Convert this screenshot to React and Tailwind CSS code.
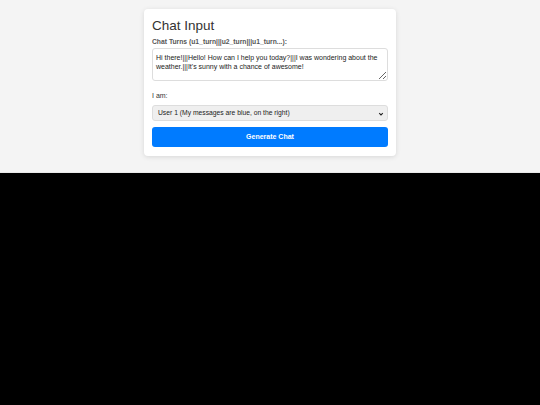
export default function App() {
  return (
    <div className="min-h-screen bg-black" style={{ fontFamily: '"Liberation Sans", Arial, sans-serif' }}>
      <div className="bg-[#f4f4f4] h-[173px] pt-[9px] border-b border-[#e8e8e8]">
        <div className="mx-auto w-[252px] bg-white rounded-[4px] shadow-[0_1px_5px_rgba(0,0,0,0.12)] px-[8px] pt-[8px] pb-[9px]">
          <h1 className="text-[13.5px] leading-[16px] text-[#333] mt-[1px] mb-[3px]">Chat Input</h1>
          <label className="block text-[6.75px] font-bold text-[#555] leading-[9px] mb-[2px]">
            Chat Turns (u1_turn|||u2_turn|||u1_turn...):
          </label>
          <textarea
            className="block w-full h-[33px] border border-[#ddd] rounded-[3px] pl-[3px] pr-[3px] pt-[3.5px] text-[7px] leading-[9.5px] text-[#222] resize-y outline-none"
            defaultValue="Hi there!|||Hello! How can I help you today?|||I was wondering about the weather.|||It's sunny with a chance of awesome!"
          />
          <label className="block text-[7px] text-[#333] leading-[9px] mt-[10px] mb-[5px]">I am:</label>
          <div className="relative h-[16px] bg-[#efefef] border border-[#ddd] rounded-[3px] flex items-center px-[5px] text-[6.75px] text-[#222]">
            <span>User 1 (My messages are blue, on the right)</span>
            <svg className="absolute right-[3px] top-[4.5px]" width="6" height="6" viewBox="0 0 10 10">
              <path d="M2 3.5 L5 6.5 L8 3.5" fill="none" stroke="#222" strokeWidth="1.8" />
            </svg>
          </div>
          <button className="mt-[6px] block w-full h-[20px] bg-[#007bff] rounded-[3px] text-white font-bold text-[7px]">
            Generate Chat
          </button>
        </div>
      </div>
    </div>
  );
}
